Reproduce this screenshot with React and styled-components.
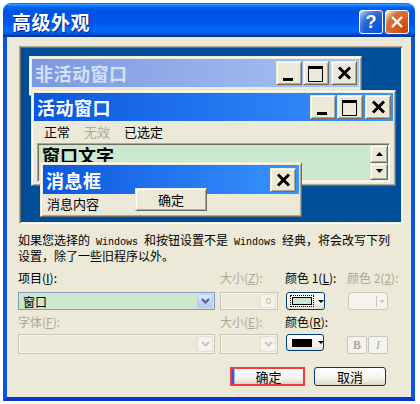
import React from 'react';
import styled, { createGlobalStyle, css } from 'styled-components';

const GlobalStyle = createGlobalStyle`
  html, body { margin: 0; padding: 0; background: #fff; }
  body { font-family: "Noto Sans CJK SC", "DejaVu Sans", sans-serif; }
  * { box-sizing: border-box; }
`;

const raised = css`
  border: 1px solid;
  border-color: #ECE9D8 #716F64 #716F64 #ECE9D8;
  box-shadow: inset 1px 1px #fff, inset -1px -1px #ACA899;
`;

const sunken = css`
  border: 1px solid;
  border-color: #ACA899 #fff #fff #ACA899;
  box-shadow: inset 1px 1px #716F64, inset -1px -1px #F1EFE2;
`;

const Page = styled.div`
  width: 420px;
  height: 404px;
  padding: 3px 5px 3px 3px;
  background: #fff;
  overflow: hidden;
`;

const Window = styled.div`
  width: 412px;
  height: 398px;
  display: flex;
  flex-direction: column;
`;

const TitleBar = styled.div`
  height: 34px;
  flex: none;
  border-radius: 8px 8px 0 0;
  background: linear-gradient(to bottom, #0058EE 0%, #3593FF 4%, #288EFF 6%, #127DFF 8%, #036FFC 10%, #0262EE 14%, #0057E5 20%, #0054E3 24%, #0055EB 56%, #005BF5 66%, #026AFE 76%, #0062EF 86%, #0052D6 92%, #0040AB 94%, #003092 100%);
  display: flex;
  align-items: center;
  gap: 2px;
  padding: 4px 6px 0 9px;
`;

const TitleText = styled.div`
  flex: 1;
  color: #fff;
  font-size: 19px;
  font-weight: bold;
  letter-spacing: 0.5px;
  line-height: 24px;
  text-shadow: 1px 1px 0 #0A1C8C;
`;

const TitleButton = styled.div`
  width: 24px;
  height: 24px;
  border: 1px solid #fff;
  border-radius: 3px;
  display: flex;
  align-items: center;
  justify-content: center;
  color: #fff;
  font: bold 18px "Liberation Sans", sans-serif;
  background: ${p => p.$danger
    ? 'radial-gradient(circle at 90% 90%, #CC4600 0%, #DC6527 55%, #CD7546 70%, #FFCCB2 90%, #fff 100%)'
    : 'radial-gradient(circle at 90% 90%, #0054E9 0%, #2263D5 55%, #4479E4 70%, #A3BBEC 90%, #fff 100%)'};
`;

const Client = styled.div`
  flex: 1;
  background: #ECE9D8;
  border-style: solid;
  border-width: 0 4px 4px 4px;
  border-color: #0A56E0 #0A56E0 #0837D0 #0A56E0;
  display: flex;
  flex-direction: column;
`;

const Preview = styled.div`
  position: relative;
  flex: none;
  margin: 9px 0 0 12px;
  width: 384px;
  height: 178px;
  background: #004E98;
  ${sunken};
`;

const Frame = styled.div`
  position: absolute;
  background: #ECE9D8;
  ${raised};
  padding: 2px;
  display: flex;
  flex-direction: column;
`;

const InactiveWindow = styled(Frame)`
  left: 9px;
  top: 9px;
  width: 333px;
  height: 40px;
`;

const ActiveWindow = styled(Frame)`
  left: 11px;
  top: 43px;
  width: 365px;
  height: 96px;
`;

const MessageWindow = styled(Frame)`
  left: 20px;
  top: 115px;
  width: 262px;
  height: 55px;
`;

const Caption = styled.div`
  height: ${p => p.$h || 28}px;
  flex: none;
  display: flex;
  align-items: center;
  padding: 0 ${p => p.$pr || 2}px 0 3px;
  background: ${p => p.$active
    ? 'linear-gradient(to right, #0A58DE, #3A93FF)'
    : 'linear-gradient(to right, #7C98E0, #A8C6F2)'};
`;

const CaptionText = styled.div`
  flex: 1;
  font-size: 18px;
  font-weight: bold;
  line-height: 24px;
  letter-spacing: 0.5px;
  color: ${p => p.$active ? '#fff' : '#D6E0F6'};
`;

const CaptionButton = styled.div`
  width: 26px;
  height: 24px;
  flex: none;
  background: #ECE9D8;
  ${raised};
  margin-left: ${p => p.$gap || 1}px;
  svg { display: block; }
`;

const MenuRow = styled.div`
  height: 21px;
  flex: none;
  display: flex;
  align-items: center;
  gap: 14px;
  padding-left: 10px;
  font-size: 13px;
  line-height: 16px;
`;

const MenuItem = styled.span`
  color: ${p => p.$disabled ? '#ACA899' : '#000'};
`;

const TextArea = styled.div`
  margin: 1px 3px 0;
  height: 39px;
  flex: none;
  background: #CCE8CF;
  ${sunken};
  padding: 1px;
  display: flex;
`;

const TextContent = styled.div`
  flex: 1;
  padding: 0 3px;
  font-size: 18px;
  font-weight: bold;
  line-height: 21px;
  color: #000;
`;

const ScrollBar = styled.div`
  width: 18px;
  display: flex;
  flex-direction: column;
`;

const ScrollButton = styled.div`
  flex: 1;
  background: #ECE9D8;
  ${raised};
  display: flex;
  align-items: center;
  justify-content: center;
`;

const MessageBody = styled.div`
  display: flex;
  align-items: flex-start;
  padding-left: 4px;
  font-size: 13px;
  line-height: 16px;
`;

const MessageText = styled.span`
  margin-top: 2px;
`;

const ClassicButton = styled.div`
  position: relative;
  margin: -6px 0 0 36px;
  width: 72px;
  height: 23px;
  background: #ECE9D8;
  ${raised};
  display: flex;
  align-items: center;
  justify-content: center;
  font-size: 13px;
`;

const Description = styled.div`
  margin: 9px 0 0 11px;
  font-size: 12px;
  line-height: 13px;
  color: #000;
  white-space: nowrap;
`;

const Mono = styled.span`
  font-family: "Liberation Mono", "DejaVu Sans Mono", monospace;
  font-size: 10px;
  white-space: pre;
`;

const Form = styled.div`
  display: grid;
  grid-template-columns: 202px 65px 62px 60px;
  grid-template-rows: 21px 23px 19px 20px;
  align-items: start;
  margin: 9px 0 0 11px;
`;

const Label = styled.div`
  font-size: 12px;
  line-height: 14px;
  white-space: nowrap;
  color: ${p => p.$disabled ? '#ACA899' : '#000'};
  u { text-decoration: underline; }
`;

const Combo = styled.div`
  width: ${p => p.$w}px;
  height: ${p => p.$h}px;
  border: 1px solid ${p => p.$disabled ? '#C9C7BA' : '#7F9DB9'};
  background: ${p => p.$fill || '#ECE9D8'};
  box-shadow: ${p => p.$disabled ? 'inset 0 0 0 1px #F4F3EE' : 'none'};
  display: flex;
  align-items: stretch;
  padding: 1px;
`;

const ComboText = styled.span`
  flex: 1;
  padding-left: 3px;
  font-size: 12px;
  line-height: 15px;
`;

const DropButton = styled.div`
  width: 16px;
  flex: none;
  border-radius: 2px;
  border: 1px solid ${p => p.$disabled ? '#E3E1D6' : '#B8CBF2'};
  background: ${p => p.$disabled
    ? '#F4F3EE'
    : 'linear-gradient(to bottom, #E1EAFE, #C3D3FD 60%, #B6C9F7)'};
  display: flex;
  flex-direction: column;
  align-items: center;
  justify-content: center;
`;

const ColorButton = styled.div`
  width: ${p => p.$w}px;
  height: ${p => p.$h}px;
  margin-left: 1px;
  border: 1px solid ${p => p.$disabled ? '#C9C7BA' : '#003C74'};
  border-radius: 3px;
  background: ${p => p.$disabled ? '#F4F3EE' : 'linear-gradient(to bottom, #fff, #F3F2EC 70%, #E3DFD3)'};
  display: flex;
  align-items: center;
  padding-left: 3px;
`;

const SwatchFocus = styled.div`
  padding: 1px;
  border: 1px dotted ${p => p.$focused ? '#000' : 'transparent'};
`;

const Swatch = styled.div`
  width: ${p => p.$w}px;
  height: ${p => p.$h}px;
  border: 1px solid #000;
  background: ${p => p.$color};
`;

const SwatchSpacer = styled.div`
  width: 22px;
`;

const Separator = styled.div`
  width: 1px;
  height: 11px;
  margin: 0 2px 0 2px;
  background: ${p => p.$disabled ? '#C9C7BA' : '#716F64'};
`;

const Arrow = styled.div`
  width: 0;
  height: 0;
  border-left: 3px solid transparent;
  border-right: 3px solid transparent;
  border-top: 3px solid ${p => p.$disabled ? '#C9C7BA' : '#000'};
`;

const StyleButtons = styled.div`
  display: flex;
  gap: 1px;
  padding-top: 2px;
`;

const StyleButton = styled.div`
  width: 20px;
  height: 18px;
  border: 1px solid #C9C7BA;
  border-radius: 2px;
  background: #F4F3EE;
  display: flex;
  align-items: center;
  justify-content: center;
  font-family: "Liberation Serif", serif;
  font-size: 12px;
  font-weight: ${p => p.$italic ? 'normal' : 'bold'};
  font-style: ${p => p.$italic ? 'italic' : 'normal'};
  color: #ACA899;
`;

const Actions = styled.div`
  display: flex;
  justify-content: flex-end;
  gap: 9px;
  margin-top: 13px;
  padding-right: 25px;
`;

const Highlight = styled.div`
  width: 75px;
  height: 19px;
  border: 2px solid #F23B3B;
  background: #fff;
  display: flex;
`;

const XPButton = styled.div`
  width: ${p => p.$w}px;
  height: ${p => p.$h}px;
  flex: ${p => p.$fill ? '1' : 'none'};
  border: 1px solid #003C74;
  border-radius: ${p => p.$fill ? '0' : '3px'};
  border-width: ${p => p.$fill ? '0 0 0 2px' : '1px'};
  border-left-color: ${p => p.$fill ? '#3A5CB6' : '#003C74'};
  box-shadow: ${p => p.$fill ? 'inset 1px 0 #9DB6EE' : 'none'};
  background: linear-gradient(to bottom, #fff, #F4F3EE 60%, #E4E0D5 90%, #D6D0C5);
  display: flex;
  align-items: center;
  justify-content: center;
  font-size: 13px;
  line-height: 15px;
  color: #000;
`;

const Chevron = ({ color }) => (
  <svg width="9" height="6" viewBox="0 0 9 6">
    <path d="M1 1l3.5 3.5L8 1" stroke={color} strokeWidth="2" fill="none" />
  </svg>
);

const SmallChevron = ({ up }) => (
  <svg width="7" height="4" viewBox="0 0 7 4">
    <path d={up ? 'M1 3.5l2.5-2.5L6 3.5' : 'M1 0.5l2.5 2.5L6 0.5'} stroke="#C9C7BA" strokeWidth="1.2" fill="none" />
  </svg>
);

const Triangle = ({ up }) => (
  <svg width="7" height="4" viewBox="0 0 7 4">
    <path d={up ? 'M0 4h7L3.5 0z' : 'M0 0h7L3.5 4z'} fill="#000" />
  </svg>
);

const MinIcon = () => (
  <svg width="24" height="22" viewBox="0 0 24 22">
    <rect x="6" y="16" width="10" height="3" fill="#000" />
  </svg>
);

const MaxIcon = () => (
  <svg width="24" height="22" viewBox="0 0 24 22">
    <rect x="4" y="4" width="15" height="3" fill="#000" />
    <path d="M4.5 6v13.5h14V6" stroke="#000" fill="none" />
  </svg>
);

const CloseIcon = () => (
  <svg width="24" height="22" viewBox="0 0 24 22">
    <path d="M7 5.5l11 11M18 5.5l-11 11" stroke="#000" strokeWidth="3" />
  </svg>
);

const CaptionButtons = () => (
  <>
    <CaptionButton><MinIcon /></CaptionButton>
    <CaptionButton><MaxIcon /></CaptionButton>
    <CaptionButton $gap={2}><CloseIcon /></CaptionButton>
  </>
);

export default function App() {
  return (
    <Page>
      <GlobalStyle />
      <Window>
        <TitleBar>
          <TitleText>高级外观</TitleText>
          <TitleButton>?</TitleButton>
          <TitleButton $danger>
            <svg width="14" height="14" viewBox="0 0 14 14">
              <path d="M2 2l10 10M12 2L2 12" stroke="#fff" strokeWidth="2.4" />
            </svg>
          </TitleButton>
        </TitleBar>
        <Client>
          <Preview>
            <InactiveWindow>
              <Caption>
                <CaptionText>非活动窗口</CaptionText>
                <CaptionButtons />
              </Caption>
            </InactiveWindow>
            <ActiveWindow>
              <Caption $active>
                <CaptionText $active>活动窗口</CaptionText>
                <CaptionButtons />
              </Caption>
              <MenuRow>
                <MenuItem>正常</MenuItem>
                <MenuItem $disabled>无效</MenuItem>
                <MenuItem>已选定</MenuItem>
              </MenuRow>
              <TextArea>
                <TextContent>窗口文字</TextContent>
                <ScrollBar>
                  <ScrollButton><Triangle up /></ScrollButton>
                  <ScrollButton><Triangle /></ScrollButton>
                </ScrollBar>
              </TextArea>
            </ActiveWindow>
            <MessageWindow>
              <Caption $active $h={29} $pr={3}>
                <CaptionText $active>消息框</CaptionText>
                <CaptionButton><CloseIcon /></CaptionButton>
              </Caption>
              <MessageBody>
                <MessageText>消息内容</MessageText>
                <ClassicButton>确定</ClassicButton>
              </MessageBody>
            </MessageWindow>
          </Preview>

          <Description>
            如果您选择的<Mono> Windows </Mono>和按钮设置不是<Mono> Windows </Mono>经典，将会改写下列<br />
            设置，除了一些旧程序以外。
          </Description>

          <Form>
            <Label>项目(<u>I</u>):</Label>
            <Label $disabled>大小(<u>Z</u>):</Label>
            <Label>颜色 1(<u>L</u>):</Label>
            <Label $disabled>颜色 2(<u>2</u>):</Label>

            <Combo $w={197} $h={18} $fill="#CCE8CF">
              <ComboText>窗口</ComboText>
              <DropButton><Chevron color="#4D6185" /></DropButton>
            </Combo>
            <Combo $w={58} $h={18} $disabled>
              <ComboText />
              <DropButton $disabled>
                <SmallChevron up />
                <SmallChevron />
              </DropButton>
            </Combo>
            <ColorButton $w={39} $h={18}>
              <SwatchFocus $focused>
                <Swatch $w={20} $h={8} $color="#CCE8CF" />
              </SwatchFocus>
              <Separator />
              <Arrow />
            </ColorButton>
            <ColorButton $w={40} $h={18} $disabled>
              <SwatchSpacer />
              <Separator $disabled />
              <Arrow $disabled />
            </ColorButton>

            <Label $disabled>字体(<u>F</u>):</Label>
            <Label $disabled>大小(<u>E</u>):</Label>
            <Label>颜色(<u>R</u>):</Label>
            <div />

            <Combo $w={197} $h={20} $disabled>
              <ComboText />
              <DropButton $disabled><Chevron color="#C9C7BA" /></DropButton>
            </Combo>
            <Combo $w={58} $h={20} $disabled>
              <ComboText />
              <DropButton $disabled><Chevron color="#C9C7BA" /></DropButton>
            </Combo>
            <ColorButton $w={38} $h={17}>
              <SwatchFocus>
                <Swatch $w={20} $h={8} $color="#000" />
              </SwatchFocus>
              <Separator />
              <Arrow />
            </ColorButton>
            <StyleButtons>
              <StyleButton>B</StyleButton>
              <StyleButton $italic>I</StyleButton>
            </StyleButtons>
          </Form>

          <Actions>
            <Highlight>
              <XPButton $fill>确定</XPButton>
            </Highlight>
            <XPButton $w={72} $h={19}>取消</XPButton>
          </Actions>
        </Client>
      </Window>
    </Page>
  );
}
